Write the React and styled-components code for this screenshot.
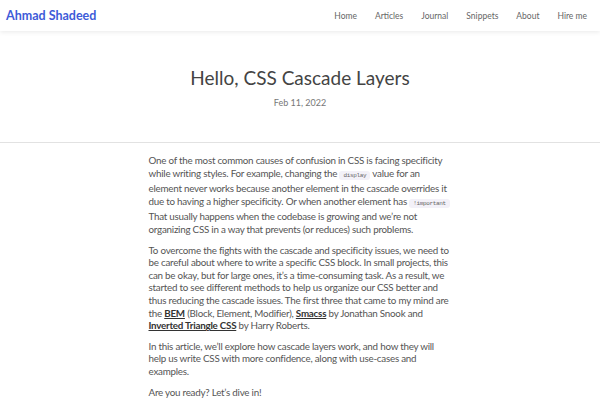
import React from 'react'
import styled, { createGlobalStyle } from 'styled-components'

const GlobalStyle = createGlobalStyle`
    * {
        box-sizing: border-box;
    }
    body {
        margin: 0;
        background: #fff;
        font-family: Lato, "Noto Sans", sans-serif;
        color: #555;
    }
`

const Header = styled.header`
    height: 31px;
    display: flex;
    align-items: center;
    justify-content: space-between;
    padding: 0 13px 0 6px;
    background: #fff;
    box-shadow: 0 1px 5px rgba(0, 0, 0, 0.09);
    position: relative;
`

const Logo = styled.a`
    font-family: Lato, "Noto Sans", sans-serif;
    font-weight: 700;
    font-size: 12.5px;
    color: #3e5bd8;
    text-decoration: none;
`

const Nav = styled.nav`
    display: flex;
    gap: 18px;

    a {
        font-family: Lato, "Noto Sans", sans-serif;
        font-size: 8.5px;
        color: #666;
        text-decoration: none;
    }
`

const Hero = styled.section`
    display: flex;
    flex-direction: column;
    align-items: center;
    padding: 33px 0 34px;
    border-bottom: 1px solid #e2e2e2;
`

const Title = styled.h1`
    margin: 0;
    font-family: Lato, "Noto Sans", sans-serif;
    font-weight: 400;
    font-size: 19px;
    color: #444;
    line-height: 28px;
`

const Date = styled.time`
    margin-top: 5px;
    font-size: 9px;
    color: #777;
    font-family: Lato, "Noto Sans", sans-serif;
`

const Article = styled.article`
    width: 303px;
    margin: 0 auto;
    padding-top: 11px;
`

const Para = styled.p`
    margin: 0 0 8px;
    font-size: 9.8px;
    letter-spacing: -0.23px;
    line-height: 12.6px;
    color: #555;
`

const Code = styled.code`
    font-family: "Liberation Mono", monospace;
    font-size: 6px;
    letter-spacing: -0.35px;
    background: #f3f1f8;
    color: #666;
    padding: 1px 4px;
    border-radius: 3px;
`

const Link = styled.a`
    font-weight: 700;
    color: #333;
    text-decoration: underline;
`

export default function App() {
    const links = ['Home', 'Articles', 'Journal', 'Snippets', 'About', 'Hire me']
    return (
        <>
            <GlobalStyle />
            <Header>
                <Logo href="#">Ahmad Shadeed</Logo>
                <Nav>
                    {links.map((l) => (
                        <a href="#" key={l}>{l}</a>
                    ))}
                </Nav>
            </Header>
            <Hero>
                <Title>Hello, CSS Cascade Layers</Title>
                <Date>Feb 11, 2022</Date>
            </Hero>
            <Article>
                <Para>
                    One of the most common causes of confusion in CSS is facing specificity while writing styles. For example, changing the <Code>display</Code> value for an element never works because another element in the cascade overrides it due to having a higher specificity. Or when another element has <Code>!important</Code> That usually happens when the codebase is growing and we’re not organizing CSS in a way that prevents (or reduces) such problems.
                </Para>
                <Para>
                    To overcome the fights with the cascade and specificity issues, we need to be careful about where to write a specific CSS block. In small projects, this can be okay, but for large ones, it’s a time-consuming task. As a result, we started to see different methods to help us organize our CSS better and thus reducing the cascade issues. The first three that came to my mind are the <Link href="#">BEM</Link> (Block, Element, Modifier), <Link href="#">Smacss</Link> by Jonathan Snook and <Link href="#">Inverted Triangle CSS</Link> by Harry Roberts.
                </Para>
                <Para>
                    In this article, we’ll explore how cascade layers work, and how they will help us write CSS with more confidence, along with use-cases and examples.
                </Para>
                <Para>Are you ready? Let’s dive in!</Para>
            </Article>
        </>
    )
}
